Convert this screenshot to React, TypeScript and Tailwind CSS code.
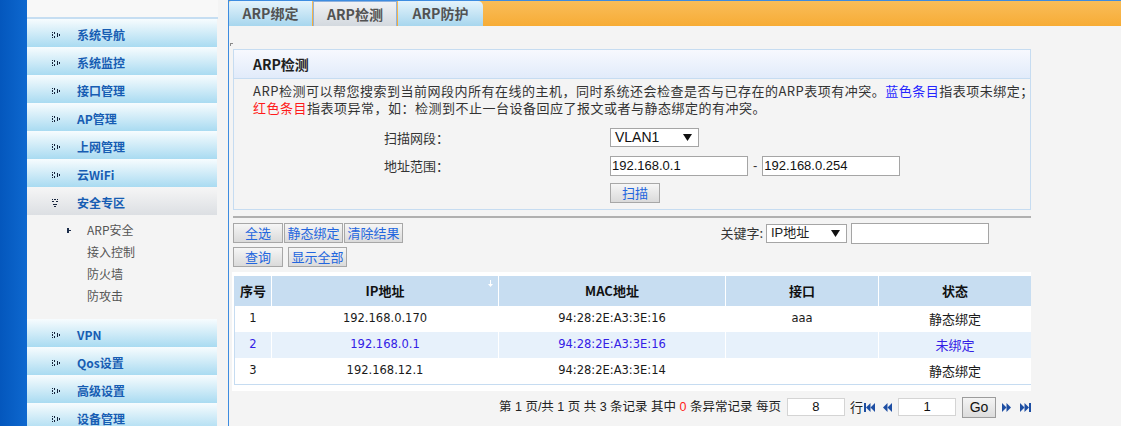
import React from 'react'

const cjk = "font-['Noto_Sans_CJK_SC',sans-serif]"
const latin = "font-['Liberation_Sans','Noto_Sans_CJK_SC',sans-serif]"
const cell = "font-['DejaVu_Sans','Noto_Sans_CJK_SC',sans-serif]"

const MENU_TOP = ['系统导航', '系统监控', '接口管理', 'AP管理', '上网管理', '云WiFi']
const SUB = ['ARP安全', '接入控制', '防火墙', '防攻击']
const MENU_BOTTOM = ['VPN', 'Qos设置', '高级设置', '设备管理']

const ROWS = [
  { no: '1', ip: '192.168.0.170', mac: '94:28:2E:A3:3E:16', port: 'aaa', state: '静态绑定', unbound: false },
  { no: '2', ip: '192.168.0.1', mac: '94:28:2E:A3:3E:16', port: '', state: '未绑定', unbound: true },
  { no: '3', ip: '192.168.12.1', mac: '94:28:2E:A3:3E:14', port: '', state: '静态绑定', unbound: false },
]

const PATTERN = ['x.x....', '..x.x..', 'x...x.x', '..x.x..', 'x.x....']

// little dotted chevron used in front of each menu group
function DotArrow({ down }: { down?: boolean }) {
  const dots: [number, number][] = []
  PATTERN.forEach((row, y) =>
    row.split('').forEach((c, x) => {
      if (c === 'x') dots.push(down ? [y, x] : [x, y])
    })
  )
  const w = down ? 5 : 7
  const h = down ? 7 : 5
  return (
    <svg width={w + 1} height={h + 1} viewBox={`0 0 ${w} ${h}`} className="shrink-0" shapeRendering="crispEdges">
      {dots.map(([x, y], i) => (
        <rect key={i} x={x} y={y} width={1} height={1} fill="#15233b" />
      ))}
    </svg>
  )
}

function MenuItem({ label, active }: { label: string; active?: boolean }) {
  return (
    <div
      className={`flex h-[28px] items-center bg-gradient-to-b pt-[4px] ${
        active ? 'from-[#f6f6f6] to-[#dcdfe3]' : 'from-[#f7fcfe] to-[#a9dbf1]'
      }`}
    >
      <div className="flex w-[50px] justify-start pl-[25px]">
        <DotArrow down={active} />
      </div>
      <span className={`${cjk} text-[12px] font-bold text-[#175db3]`}>{label}</span>
    </div>
  )
}

function Sidebar() {
  return (
    <aside className="flex h-full w-[228px] shrink-0">
      <div className="w-[27px] bg-gradient-to-r from-[#0457bd] to-[#0e68cf]" />
      <div className="flex-1 bg-[#f4f4f4]">
        <div className="h-[17px] w-[191px] bg-[#f8f8f8]" />
        <div className="h-[2px] w-[191px] bg-[#c6def2]" />
        <div className="w-[190px]">
          {MENU_TOP.map((m) => (
            <MenuItem key={m} label={m} />
          ))}
          <MenuItem label="安全专区" active />
          <div className="pt-[4px] pb-[12px]">
            {SUB.map((s, i) => (
              <div key={s} className="flex h-[22px] items-center">
                <div className="w-[60px] pl-[40px]">
                  {i === 0 && (
                    <svg width="5" height="5" viewBox="0 0 5 5" shapeRendering="crispEdges">
                      <rect x="0" y="0" width="2" height="1" fill="#1c2d4a" />
                      <rect x="0" y="1" width="2" height="3" fill="#1c2d4a" />
                      <rect x="2" y="2" width="2" height="1" fill="#1c2d4a" />
                      <rect x="0" y="4" width="2" height="1" fill="#1c2d4a" />
                    </svg>
                  )}
                </div>
                <span className={`${cjk} text-[12px] text-[#555]`}>{s}</span>
              </div>
            ))}
          </div>
          {MENU_BOTTOM.map((m) => (
            <MenuItem key={m} label={m} />
          ))}
        </div>
      </div>
    </aside>
  )
}

function Tabs() {
  const base = `${cjk} flex h-[25px] items-center justify-center text-[14px] font-bold text-[#525252]`
  return (
    <div className="flex h-[25px] shrink-0 bg-gradient-to-b from-[#f9bd58] to-[#f7ac35]">
      <div className={`${base} w-[83px] rounded-tl-[2px] bg-gradient-to-b from-[#e4f3fb] to-[#a7d6ee]`}>ARP绑定</div>
      <div className={`${base} ml-[1px] w-[84px] border border-b-0 border-[#8fb1dd] bg-gradient-to-b from-[#f1f2f4] to-[#d3d9df]`}>
        ARP检测
      </div>
      <div className={`${base} ml-[1px] w-[85px] rounded-tr-[5px] bg-gradient-to-b from-[#e4f3fb] to-[#a7d6ee]`}>ARP防护</div>
    </div>
  )
}

function SelectBox({ text, w, h, textCls }: { text: string; w: string; h: string; textCls: string }) {
  return (
    <div className={`flex ${w} ${h} items-center justify-between border border-[#a5a5a5] bg-white pr-[6px] pl-[4px]`}>
      <span className={textCls}>{text}</span>
      <svg width="9" height="7" viewBox="0 0 9 7">
        <polygon points="0,0 9,0 4.5,7" fill="#111" />
      </svg>
    </div>
  )
}

function Btn({ label, w }: { label: string; w: string }) {
  return (
    <div
      className={`${cjk} flex ${w} h-[20px] items-center justify-center border border-[#a7a7a7] bg-gradient-to-b from-[#f6f6f6] to-[#dadada] text-[13px] text-[#2366de]`}
    >
      {label}
    </div>
  )
}

function NavIcon({ kind }: { kind: 'first' | 'prev' | 'next' | 'last' }) {
  const c = '#1d4ea3'
  if (kind === 'first')
    return (
      <svg width="11" height="9" viewBox="0 0 11 9">
        <rect x="0" y="0" width="2" height="9" fill={c} />
        <polygon points="6.5,0 2,4.5 6.5,9" fill={c} />
        <polygon points="11,0 6.5,4.5 11,9" fill={c} />
      </svg>
    )
  if (kind === 'prev')
    return (
      <svg width="9" height="9" viewBox="0 0 9 9">
        <polygon points="4.5,0 0,4.5 4.5,9" fill={c} />
        <polygon points="9,0 4.5,4.5 9,9" fill={c} />
      </svg>
    )
  if (kind === 'next')
    return (
      <svg width="9" height="9" viewBox="0 0 9 9">
        <polygon points="0,0 4.5,4.5 0,9" fill={c} />
        <polygon points="4.5,0 9,4.5 4.5,9" fill={c} />
      </svg>
    )
  return (
    <svg width="11" height="9" viewBox="0 0 11 9">
      <polygon points="0,0 4.5,4.5 0,9" fill={c} />
      <polygon points="4.5,0 9,4.5 4.5,9" fill={c} />
      <rect x="9" y="0" width="2" height="9" fill={c} />
    </svg>
  )
}

function DetectPanel() {
  return (
    <div className="w-[798px] border border-[#c6dcf1]">
      <div className="flex h-[29px] items-center border-b border-[#c6dcf1] bg-gradient-to-b from-[#f7f9fe] to-[#e1ebfa] pl-[19px]">
        <span className={`${cjk} text-[14px] font-bold text-[#1e1e1e]`}>ARP检测</span>
      </div>
      <div className="pt-[3px] pb-[6px] pl-[19px]">
        <div className={`${cjk} text-[13px] leading-[17px] tracking-[0.5px] text-[#333]`}>
          <div className="whitespace-nowrap">
            ARP检测可以帮您搜索到当前网段内所有在线的主机，同时系统还会检查是否与已存在的ARP表项有冲突。
            <span className="text-[#2424ff]">蓝色条目</span>指表项未绑定；
          </div>
          <div>
            <span className="text-[#ff1a1a]">红色条目</span>指表项异常，如：检测到不止一台设备回应了报文或者与静态绑定的有冲突。
          </div>
        </div>
        <div className="mt-[12px] ml-[131px]">
          <div className="flex items-center">
            <div className={`${cjk} w-[226px] text-[13px] text-[#333]`}>扫描网段：</div>
            <SelectBox text="VLAN1" w="w-[89px]" h="h-[19px]" textCls={`${latin} text-[14px] text-[#111]`} />
          </div>
          <div className="mt-[8px] flex items-center">
            <div className={`${cjk} w-[226px] text-[13px] text-[#333]`}>地址范围：</div>
            <input
              readOnly
              value="192.168.0.1"
              className={`${latin} h-[20px] w-[138px] border border-[#a5a5a5] bg-white px-[1px] text-[13px] text-[#111] outline-none`}
            />
            <span className={`${latin} mx-[5px] text-[13px] text-[#333]`}>-</span>
            <input
              readOnly
              value="192.168.0.254"
              className={`${latin} h-[20px] w-[138px] border border-[#a5a5a5] bg-white px-[1px] text-[13px] text-[#111] outline-none`}
            />
          </div>
          <div className="mt-[7px] flex">
            <div className="w-[226px]" />
            <Btn label="扫描" w="w-[50px]" />
          </div>
        </div>
      </div>
    </div>
  )
}

function ResultTable() {
  return (
    <div className="-ml-[1px] w-[799px] bg-white pt-[4px] pb-[6px] pl-[2px]">
      <div className="grid grid-cols-[36px_226px_226px_152px_1fr] gap-x-[1px] border-b border-l border-[#c6dcf1] bg-white">
        {['序号', 'IP地址', 'MAC地址', '接口', '状态'].map((h, i) => (
          <div
            key={h}
            className={`${cjk} relative flex h-[30px] items-center justify-center bg-[#c7ddf1] text-[13px] font-bold text-[#111]`}
          >
            {h}
            {i === 1 && (
              <svg className="absolute top-[4px] right-[5px]" width="5" height="7" viewBox="0 0 5 7">
                <rect x="2" y="0" width="1" height="5" fill="#fff" />
                <polygon points="0,4 5,4 2.5,7" fill="#fff" />
              </svg>
            )}
          </div>
        ))}
        {ROWS.map((r) => {
          const bg = r.unbound ? 'bg-[#e7f1fb]' : 'bg-white'
          const col = r.unbound ? 'text-[#3320e6]' : 'text-[#1a1a1a]'
          const num = `${cell} flex h-[26px] items-center justify-center text-[11.5px] ${bg} ${col}`
          return (
            <React.Fragment key={r.no}>
              <div className={num}>{r.no}</div>
              <div className={num}>{r.ip}</div>
              <div className={num}>{r.mac}</div>
              <div className={num}>{r.port}</div>
              <div className={`${cjk} flex h-[26px] items-center justify-center text-[13px] ${bg} ${col}`}>{r.state}</div>
            </React.Fragment>
          )
        })}
      </div>
    </div>
  )
}

function Pager() {
  return (
    <div className={`${latin} mt-[6px] flex h-[21px] w-[798px] items-center justify-end text-[12.5px] text-[#222]`}>
      <span className="whitespace-pre">
        第 1 页/共 1 页 共 3 条记录 其中 <span className="text-[#ff1a1a]">0</span> 条异常记录 每页
      </span>
      <input
        readOnly
        value="8"
        className="ml-[6px] h-[18px] w-[58px] border border-[#d4d4d4] bg-white text-center text-[13px] text-[#111] outline-none"
      />
      <span className={`${cjk} ml-[5px] text-[13px]`}>行</span>
      <span className="ml-[1px] flex">
        <NavIcon kind="first" />
      </span>
      <span className="ml-[8px] flex">
        <NavIcon kind="prev" />
      </span>
      <input
        readOnly
        value="1"
        className="ml-[6px] h-[18px] w-[58px] border border-[#d4d4d4] bg-white text-center text-[13px] text-[#111] outline-none"
      />
      <div className="ml-[6px] flex h-[21px] w-[34px] items-center justify-center border border-[#9c9c9c] bg-gradient-to-b from-[#f4f4f4] to-[#dcdcdc] text-[14px] text-[#111]">
        Go
      </div>
      <span className="ml-[6px] flex">
        <NavIcon kind="next" />
      </span>
      <span className="ml-[9px] flex">
        <NavIcon kind="last" />
      </span>
    </div>
  )
}

export default function App() {
  return (
    <div className="flex h-[426px] w-[1121px] overflow-hidden bg-[#f4f4f4]">
      <Sidebar />
      <main className="flex min-w-0 flex-1 flex-col border-t border-l border-[#3d8ce0] bg-[#f4f4f4]">
        <Tabs />
        <div className="pl-[4px]">
          <div className="h-[23px] pt-[17px]">
            <div className="-ml-[3px] h-[3px] w-[3px] border-t border-l border-[#8a8a8a]" />
          </div>
          <DetectPanel />
          <div className="mt-[6px] h-[2px] w-[798px] bg-[#b0b0b0]" />
          <div className="mt-[5px] flex w-[798px] items-start">
            <div className="flex gap-[1px]">
              <Btn label="全选" w="w-[50px]" />
              <Btn label="静态绑定" w="w-[59px]" />
              <Btn label="清除结果" w="w-[59px]" />
            </div>
            <div className="mr-[42px] ml-auto flex items-center">
              <span className={`${cjk} mr-[3px] text-[13px] text-[#333]`}>关键字:</span>
              <SelectBox text="IP地址" w="w-[81px]" h="h-[19px]" textCls={`${latin} text-[13px] text-[#222]`} />
              <input readOnly value="" className="ml-[4px] h-[21px] w-[138px] border border-[#a5a5a5] bg-white outline-none" />
            </div>
          </div>
          <div className="mt-[3px] flex gap-[5px]">
            <Btn label="查询" w="w-[50px]" />
            <Btn label="显示全部" w="w-[59px]" />
          </div>
          <div className="mt-[5px]">
            <ResultTable />
          </div>
          <Pager />
        </div>
      </main>
    </div>
  )
}
